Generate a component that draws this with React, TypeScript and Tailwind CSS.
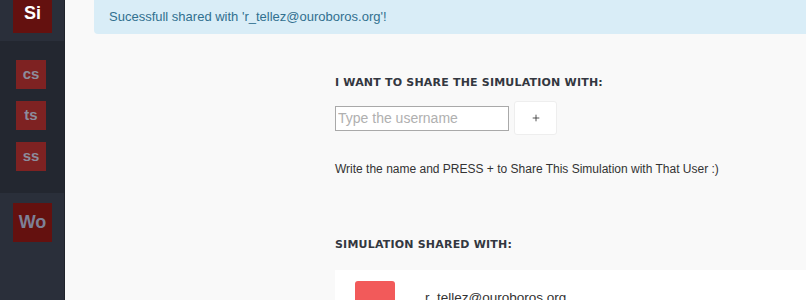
import { Plus } from "lucide-react";

const SideBox = ({ label, small, active }: { label: string; small?: boolean; active?: boolean }) => {
  if (small) {
    return (
      <div className="w-[30px] h-[29px] bg-[#7e2222] flex items-center justify-center text-[15px] font-bold text-[#8c8c9c]">
        {label}
      </div>
    );
  }
  return (
    <div
      className={`w-[39px] h-[39px] bg-[#64110f] flex items-center justify-center text-[18px] font-bold ${
        active ? "text-white" : "text-[#7d8096]"
      }`}
    >
      {label}
    </div>
  );
};

const App = () => {
  return (
    <div
      className="flex w-[806px] h-[300px] overflow-hidden bg-[#f9f9f9]"
      style={{ fontFamily: "'Liberation Sans', Arial, sans-serif" }}
    >
      <aside className="w-[65px] shrink-0 flex flex-col bg-[#2a2f3a] border-r border-[#1f232b]">
        <div className="h-[41px] shrink-0 pl-[13px]">
          <div className="-mt-[6px]">
            <SideBox label="Si" active />
          </div>
        </div>
        <div className="h-[152px] shrink-0 bg-[#232730] flex flex-col gap-[12px] pl-[16px] pt-[19px]">
          <SideBox label="cs" small />
          <SideBox label="ts" small />
          <SideBox label="ss" small />
        </div>
        <div className="pl-[13px] pt-[10px]">
          <SideBox label="Wo" />
        </div>
      </aside>

      <main className="flex-1 flex flex-col">
        <div className="shrink-0 ml-[29px] h-[34px] bg-[#d9edf7] rounded-bl-[4px] flex items-center pl-[15px] text-[13px] text-[#31708f]">
          Sucessfull shared with 'r_tellez@ouroboros.org'!
        </div>

        <div className="shrink-0 pl-[270px] pt-[43px]">
          <h2
            className="text-[11px] font-bold uppercase tracking-[0.2px] text-[#333740] leading-none"
            style={{ fontFamily: "'DejaVu Sans', sans-serif" }}
          >
            I want to share the simulation with:
          </h2>

          <div className="flex items-center gap-[5px] mt-[13px]">
            <input
              className="w-[174px] h-[25px] border border-[#a9a9a9] bg-white px-[2px] text-[14px] outline-none placeholder:text-[#b0b0b0]"
              placeholder="Type the username"
            />
            <button className="w-[43px] h-[34px] bg-white rounded-[3px] border border-[#eeeeee] flex items-center justify-center text-[#333]">
              <Plus size={10} strokeWidth={2} />
            </button>
          </div>

          <p className="mt-[25px] text-[12px] text-[#333]">
            Write the name and PRESS + to Share This Simulation with That User :)
          </p>

          <h2
            className="mt-[61px] text-[11px] font-bold uppercase tracking-[0.2px] text-[#333740] leading-none"
            style={{ fontFamily: "'DejaVu Sans', sans-serif" }}
          >
            Simulation shared with:
          </h2>

          <div className="mt-[20px] bg-white h-[60px] flex items-start pl-[20px] pt-[11px] gap-[30px]">
            <div className="w-[40px] h-[34px] rounded-[3px] bg-[#f25a5a] flex items-end justify-center text-white text-[13px]">
              -
            </div>
            <span className="text-[13.5px] text-[#333] pt-[7px]">r_tellez@ouroboros.org</span>
          </div>
        </div>
      </main>
    </div>
  );
};

export default App;
